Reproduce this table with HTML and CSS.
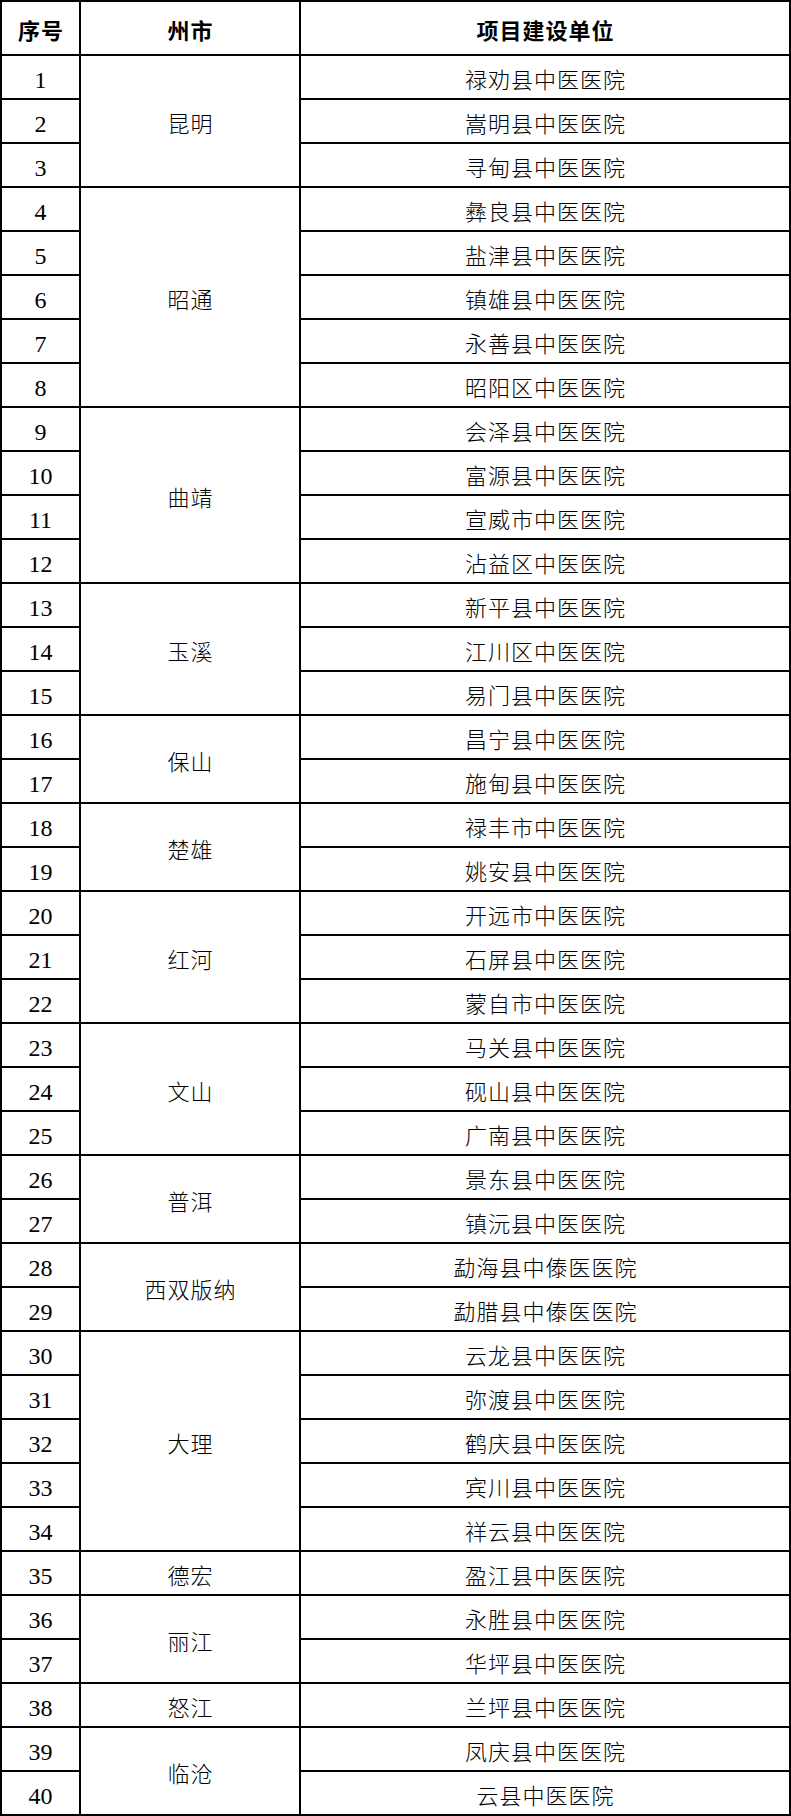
FILE: index.html
```html
<!DOCTYPE html>
<html lang="zh-CN">
<head>
<meta charset="utf-8">
<title>项目建设单位</title>
<link rel="stylesheet" href="styles.css">
</head>
<body>
<div class="sheet">
  <div class="cell head c1">序号</div>
  <div class="cell head c2">州市</div>
  <div class="cell head c3">项目建设单位</div>

  <div class="cell num c1">1</div><div class="cell city c2 span3">昆明</div><div class="cell c3">禄劝县中医医院</div>
  <div class="cell num c1">2</div><div class="cell c3">嵩明县中医医院</div>
  <div class="cell num c1">3</div><div class="cell c3">寻甸县中医医院</div>

  <div class="cell num c1">4</div><div class="cell city c2 span5">昭通</div><div class="cell c3">彝良县中医医院</div>
  <div class="cell num c1">5</div><div class="cell c3">盐津县中医医院</div>
  <div class="cell num c1">6</div><div class="cell c3">镇雄县中医医院</div>
  <div class="cell num c1">7</div><div class="cell c3">永善县中医医院</div>
  <div class="cell num c1">8</div><div class="cell c3">昭阳区中医医院</div>

  <div class="cell num c1">9</div><div class="cell city c2 span4">曲靖</div><div class="cell c3">会泽县中医医院</div>
  <div class="cell num c1">10</div><div class="cell c3">富源县中医医院</div>
  <div class="cell num c1">11</div><div class="cell c3">宣威市中医医院</div>
  <div class="cell num c1">12</div><div class="cell c3">沾益区中医医院</div>

  <div class="cell num c1">13</div><div class="cell city c2 span3">玉溪</div><div class="cell c3">新平县中医医院</div>
  <div class="cell num c1">14</div><div class="cell c3">江川区中医医院</div>
  <div class="cell num c1">15</div><div class="cell c3">易门县中医医院</div>

  <div class="cell num c1">16</div><div class="cell city c2 span2">保山</div><div class="cell c3">昌宁县中医医院</div>
  <div class="cell num c1">17</div><div class="cell c3">施甸县中医医院</div>

  <div class="cell num c1">18</div><div class="cell city c2 span2">楚雄</div><div class="cell c3">禄丰市中医医院</div>
  <div class="cell num c1">19</div><div class="cell c3">姚安县中医医院</div>

  <div class="cell num c1">20</div><div class="cell city c2 span3">红河</div><div class="cell c3">开远市中医医院</div>
  <div class="cell num c1">21</div><div class="cell c3">石屏县中医医院</div>
  <div class="cell num c1">22</div><div class="cell c3">蒙自市中医医院</div>

  <div class="cell num c1">23</div><div class="cell city c2 span3">文山</div><div class="cell c3">马关县中医医院</div>
  <div class="cell num c1">24</div><div class="cell c3">砚山县中医医院</div>
  <div class="cell num c1">25</div><div class="cell c3">广南县中医医院</div>

  <div class="cell num c1">26</div><div class="cell city c2 span2">普洱</div><div class="cell c3">景东县中医医院</div>
  <div class="cell num c1">27</div><div class="cell c3">镇沅县中医医院</div>

  <div class="cell num c1">28</div><div class="cell city c2 span2">西双版纳</div><div class="cell c3">勐海县中傣医医院</div>
  <div class="cell num c1">29</div><div class="cell c3">勐腊县中傣医医院</div>

  <div class="cell num c1">30</div><div class="cell city c2 span5">大理</div><div class="cell c3">云龙县中医医院</div>
  <div class="cell num c1">31</div><div class="cell c3">弥渡县中医医院</div>
  <div class="cell num c1">32</div><div class="cell c3">鹤庆县中医医院</div>
  <div class="cell num c1">33</div><div class="cell c3">宾川县中医医院</div>
  <div class="cell num c1">34</div><div class="cell c3">祥云县中医医院</div>

  <div class="cell num c1">35</div><div class="cell city c2 span1">德宏</div><div class="cell c3">盈江县中医医院</div>

  <div class="cell num c1">36</div><div class="cell city c2 span2">丽江</div><div class="cell c3">永胜县中医医院</div>
  <div class="cell num c1">37</div><div class="cell c3">华坪县中医医院</div>

  <div class="cell num c1">38</div><div class="cell city c2 span1">怒江</div><div class="cell c3">兰坪县中医医院</div>

  <div class="cell num c1">39</div><div class="cell city c2 span2">临沧</div><div class="cell c3">凤庆县中医医院</div>
  <div class="cell num c1">40</div><div class="cell c3">云县中医医院</div>
</div>
</body>
</html>
```

FILE: styles.css
```css
html, body {
  margin: 0;
  padding: 0;
  background: #ffffff;
}

body {
  width: 791px;
  font-family: "Liberation Serif", "Noto Sans CJK SC", serif;
  color: #000000;
}

.sheet {
  display: grid;
  grid-template-columns: 79px 220px 490px;
  grid-template-rows: 54px;
  grid-auto-rows: 44px;
  border-left: 2px solid #000;
  border-top: 2px solid #000;
  width: 789px;
}

.cell {
  box-sizing: border-box;
  border-right: 2px solid #000;
  border-bottom: 2px solid #000;
  display: flex;
  align-items: center;
  justify-content: center;
  padding-top: 8px;
  padding-left: 1px;
  font-size: 22px;
  font-weight: 300;
  letter-spacing: 1px;
  line-height: 1;
  white-space: nowrap;
}

.head {
  font-weight: 700;
}

.num {
  font-size: 24px;
  letter-spacing: 0;
  padding-left: 0;
  padding-top: 6px;
}

.c1 { grid-column: 1; }
.c2 { grid-column: 2; }
.c3 { grid-column: 3; }

.span1 { grid-row: span 1; }
.span2 { grid-row: span 2; }
.span3 { grid-row: span 3; }
.span4 { grid-row: span 4; }
.span5 { grid-row: span 5; }
```
